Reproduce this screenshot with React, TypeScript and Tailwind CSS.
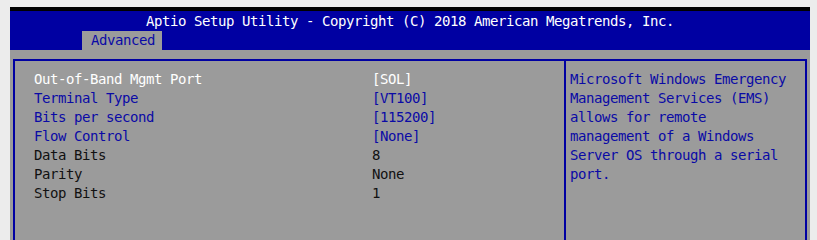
import React from 'react';

const rows = [
  { label: 'Out-of-Band Mgmt Port', value: '[SOL]', tone: 'active' },
  { label: 'Terminal Type', value: '[VT100]', tone: 'option' },
  { label: 'Bits per second', value: '[115200]', tone: 'option' },
  { label: 'Flow Control', value: '[None]', tone: 'option' },
  { label: 'Data Bits', value: '8', tone: 'fixed' },
  { label: 'Parity', value: 'None', tone: 'fixed' },
  { label: 'Stop Bits', value: '1', tone: 'fixed' },
];

const help = [
  'Microsoft Windows Emergency',
  'Management Services (EMS)',
  'allows for remote',
  'management of a Windows',
  'Server OS through a serial',
  'port.',
];

const toneClass: Record<string, string> = {
  active: 'text-white',
  option: 'text-[#0a0aa6]',
  fixed: 'text-[#111111]',
};

export default function App() {
  return (
    <div className="w-[817px] h-[240px] overflow-hidden bg-[#ececec] pt-[7px] pl-[10px] font-['DejaVu_Sans_Mono',monospace] text-[14px] tracking-[-0.43px] leading-[19px]">
      <div className="w-[800px] flex flex-col">
        <div className="h-[4px] bg-black" />

        {/* header */}
        <div className="h-[39px] bg-[#0000a2] flex flex-col">
          <div className="h-[20px] pl-[136px] pt-[1px] text-white whitespace-pre">
            Aptio Setup Utility - Copyright (C) 2018 American Megatrends, Inc.
          </div>
          <div className="flex">
            <div className="ml-[72px] w-[80px] h-[19px] bg-[#9b9b9b] pl-[9px] text-[#0a0aa6]">
              Advanced
            </div>
          </div>
        </div>

        {/* body */}
        <div className="h-[190px] bg-[#9b9b9b] pt-[9px] pl-[3px]">
          <div className="w-[794px] h-[200px] flex border-2 border-[#0000a2]">
            <div className="w-[551px] pt-[9px] pl-[19px] border-r-2 border-[#0000a2]">
              {rows.map((row) => (
                <div key={row.label} className={`flex h-[19px] whitespace-pre ${toneClass[row.tone]}`}>
                  <span className="w-[338px]">{row.label}</span>
                  <span>{row.value}</span>
                </div>
              ))}
            </div>
            <div className="flex-1 pt-[9px] pl-[4px] text-[#0a0aa6]">
              {help.map((line) => (
                <div key={line} className="h-[19px] whitespace-pre">
                  {line}
                </div>
              ))}
            </div>
          </div>
        </div>
      </div>
    </div>
  );
}
